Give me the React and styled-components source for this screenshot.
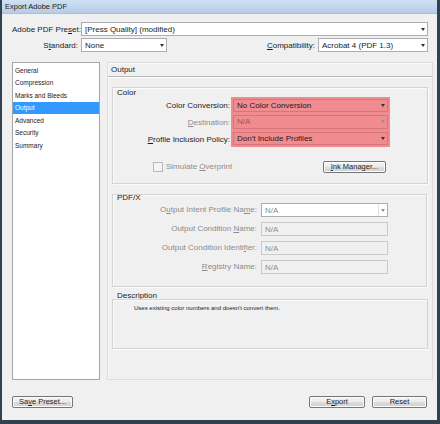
import React from 'react';
import styled, { createGlobalStyle } from 'styled-components';

const colors = {
    face: '#f0f0f0',
    frame: '#2e4250',
    text: '#1b1b1b',
    disabled: '#8c8c8c',
    groupLine: '#d3d3d3',
    field: '#abadb3',
    select: '#3399ff',
    mark: '#f08c90',
    markLine: '#d8747a',
}

const GlobalStyle = createGlobalStyle`
    html, body {
        margin: 0;
        padding: 0;
        background: ${colors.face};
    }
    * {
        box-sizing: border-box;
    }
`

const Window = styled.div`
    width: 440px;
    height: 424px;
    background: ${colors.face};
    border-left: 2px solid ${colors.frame};
    border-right: 3px solid ${colors.frame};
    border-bottom: 4px solid ${colors.frame};
    display: flex;
    flex-direction: column;
    font-family: "Liberation Sans", Arial, sans-serif;
    font-size: 8px;
    color: ${colors.text};
`

const TitleBar = styled.div`
    height: 14px;
    flex: none;
    display: flex;
    align-items: center;
    padding-left: 3px;
    font-size: 7.5px;
    background: linear-gradient(#cfe0f2, #b5cde8);
    border-bottom: 1px solid #a9c0da;
`

const Content = styled.div`
    flex: 1;
    display: flex;
    flex-direction: column;
    padding: 8px 9px 0 10px;
`

const TopRow = styled.div`
    display: flex;
    align-items: center;
    height: 14px;
    margin-bottom: ${props => props.gap || 0}px;
`

const Label = styled.span`
    width: ${props => props.width ? props.width + 'px' : 'auto'};
    flex: none;
    text-align: right;
    white-space: nowrap;
    padding-right: ${props => props.pad || 3}px;
    color: ${props => props.disabled ? colors.disabled : colors.text};
`

const Select = styled.div`
    height: 14px;
    width: ${props => props.width ? props.width + 'px' : 'auto'};
    flex: ${props => props.width ? 'none' : 1};
    display: flex;
    align-items: center;
    padding-left: 3px;
    background: ${props => props.marked ? colors.mark : props.disabled ? colors.face : '#fff'};
    border: 1px solid ${props => props.marked ? colors.markLine : props.disabled ? '#c9c9c9' : colors.field};
    color: ${props => props.dim ? (props.marked ? '#9a5458' : colors.disabled) : colors.text};
    white-space: nowrap;
    overflow: hidden;
    span:first-child {
        flex: 1;
    }
`

const Arrow = styled.span`
    flex: none;
    width: 9px;
    height: 100%;
    display: flex;
    align-items: center;
    justify-content: center;
    border-left: ${props => props.split ? '1px solid #e2e2e2' : 'none'};
    &::after {
        content: '';
        border-left: 2.5px solid transparent;
        border-right: 2.5px solid transparent;
        border-top: 3px solid ${props => props.light ? '#9c8a8c' : '#333'};
    }
`

const Spacer = styled.div`
    flex: 1;
`

const Body = styled.div`
    margin-top: 10px;
    height: 318px;
    flex: none;
    display: flex;
    gap: 7px;
`

const NavList = styled.div`
    width: 88px;
    flex: none;
    background: #fff;
    border: 1px solid #a5a5a5;
    padding-top: 1px;
    font-size: 6.5px;
`

const NavItem = styled.div`
    height: 12.5px;
    display: flex;
    align-items: center;
    padding-left: 2px;
    background: ${props => props.active ? colors.select : 'transparent'};
    color: ${props => props.active ? '#fff' : colors.text};
`

const Panel = styled.div`
    width: 326px;
    flex: none;
    border: 1px solid #dcdcdc;
    box-shadow: inset 1px 1px 0 #fafafa;
    display: flex;
    flex-direction: column;
    padding: 0 4px;
`

const PanelHeader = styled.div`
    height: 14px;
    display: flex;
    align-items: center;
    padding-left: 3px;
    margin: 0 -4px;
    border-bottom: 1px solid #b4b4b4;
    box-shadow: 0 1px 0 #fff;
`

const Group = styled.div`
    margin-top: ${props => props.top}px;
    border: 1px solid ${colors.groupLine};
    box-shadow: inset 1px 1px 0 #fbfbfb, 1px 1px 0 #fbfbfb;
    padding-bottom: ${props => props.bottom}px;
    width: ${props => props.width || 316}px;
`

const GroupTitle = styled.div`
    height: 9px;
    line-height: 9px;
    padding-left: 4px;
    margin-top: ${props => props.shift || 0}px;
`

const FieldBlock = styled.div`
    display: flex;
`

const LabelStack = styled.div`
    width: ${props => props.width}px;
    flex: none;
    display: flex;
    flex-direction: column;
    gap: ${props => props.gap}px;
    padding-top: ${props => props.top || 0}px;
`

const StackLabel = styled.div`
    height: 14px;
    line-height: 14px;
    text-align: right;
    white-space: nowrap;
    padding-right: ${props => props.pad || 1}px;
    color: ${props => props.disabled ? colors.disabled : colors.text};
`

const Highlight = styled.div`
    width: 159px;
    flex: none;
    background: ${colors.mark};
    padding: 2px;
    display: flex;
    flex-direction: column;
    gap: 3px;
`

const FieldStack = styled.div`
    width: 127px;
    flex: none;
    display: flex;
    flex-direction: column;
    gap: 5px;
    padding-top: 1px;
`

const OptionRow = styled.div`
    margin-top: 13px;
    height: 13px;
    display: flex;
    align-items: center;
    padding: 0 41px 0 40px;
`

const Check = styled.label`
    display: flex;
    align-items: center;
    gap: 3px;
    color: ${colors.disabled};
    &::before {
        content: '';
        width: 8px;
        height: 8px;
        border: 1px solid #b8b8b8;
        background: #f4f4f4;
    }
`

const Button = styled.button`
    height: 12px;
    width: ${props => props.width}px;
    padding: 0;
    font-family: inherit;
    font-size: 7.5px;
    color: ${colors.text};
    border: 1px solid #767676;
    border-radius: 2px;
    background: linear-gradient(#f3f3f3 0%, #ebebeb 50%, #dddddd 51%, #cfcfcf 100%);
    box-shadow: inset 0 0 0 1px #fcfcfc;
    line-height: 10px;
`

const DescTitle = styled.div`
    margin-top: 4px;
    height: 9px;
    line-height: 9px;
    padding-left: 5px;
`

const DescBox = styled.div`
    height: 50px;
    width: 316px;
    margin-top: -1px;
    border: 1px solid ${colors.groupLine};
    box-shadow: inset 1px 1px 0 #fbfbfb, 0 1px 0 #fff;
    padding: 5px 0 0 21px;
    font-size: 6px;
`

const Footer = styled.div`
    margin-top: 16px;
    display: flex;
    align-items: center;
    padding-right: 1px;
    gap: 7px;
`

const navItems = ['General', 'Compression', 'Marks and Bleeds', 'Output', 'Advanced', 'Security', 'Summary']

const pdfxRows = [
    { label: <>O<u>u</u>tput Intent Profile Na<u>m</u>e:</>, value: 'N/A', select: true },
    { label: <>Output Condition <u>N</u>ame:</>, value: 'N/A' },
    { label: <>Output Condition Identi<u>f</u>ier:</>, value: 'N/A' },
    { label: <><u>R</u>egistry Name:</>, value: 'N/A' },
]

export default function App() {
    return (
        <Window>
            <GlobalStyle />
            <TitleBar>Export Adobe PDF</TitleBar>
            <Content>
                <TopRow gap={2}>
                    <Label width={69}>Adobe PDF Pre<u>s</u>et:</Label>
                    <Select>
                        <span>[Press Quality] (modified)</span>
                        <Arrow />
                    </Select>
                </TopRow>
                <TopRow>
                    <Label width={69}>S<u>t</u>andard:</Label>
                    <Select width={86}>
                        <span>None</span>
                        <Arrow />
                    </Select>
                    <Spacer />
                    <Label><u>C</u>ompatibility:</Label>
                    <Select width={110}>
                        <span>Acrobat 4 (PDF 1.3)</span>
                        <Arrow />
                    </Select>
                </TopRow>

                <Body>
                    <NavList>
                        {navItems.map(item =>
                            <NavItem key={item} active={item === 'Output'}>{item}</NavItem>
                        )}
                    </NavList>

                    <Panel>
                        <PanelHeader>Output</PanelHeader>

                        <Group top={10} bottom={10}>
                            <GroupTitle>Color</GroupTitle>
                            <FieldBlock>
                                <LabelStack width={118} gap={3} top={2}>
                                    <StackLabel>Color Conversion:</StackLabel>
                                    <StackLabel disabled><u>D</u>estination:</StackLabel>
                                    <StackLabel><u>P</u>rofile Inclusion Policy:</StackLabel>
                                </LabelStack>
                                <Highlight>
                                    <Select marked>
                                        <span>No Color Conversion</span>
                                        <Arrow />
                                    </Select>
                                    <Select marked dim>
                                        <span>N/A</span>
                                        <Arrow light />
                                    </Select>
                                    <Select marked>
                                        <span>Don't Include Profiles</span>
                                        <Arrow />
                                    </Select>
                                </Highlight>
                            </FieldBlock>
                            <OptionRow>
                                <Check><span>Simulate <u>O</u>verprint</span></Check>
                                <Spacer />
                                <Button width={63}><u>I</u>nk Manager...</Button>
                            </OptionRow>
                        </Group>

                        <Group top={10} bottom={12} width={315}>
                            <GroupTitle shift={-2}>PDF/X</GroupTitle>
                            <FieldBlock>
                                <LabelStack width={148} gap={5} top={1}>
                                    {pdfxRows.map((row, i) =>
                                        <StackLabel key={i} disabled pad={4}>{row.label}</StackLabel>
                                    )}
                                </LabelStack>
                                <FieldStack>
                                    {pdfxRows.map((row, i) =>
                                        <Select key={i} disabled={!row.select} dim>
                                            <span>{row.value}</span>
                                            {row.select && <Arrow split light />}
                                        </Select>
                                    )}
                                </FieldStack>
                            </FieldBlock>
                        </Group>

                        <DescTitle>Description</DescTitle>
                        <DescBox>Uses existing color numbers and doesn't convert them.</DescBox>
                    </Panel>
                </Body>

                <Footer>
                    <Button width={61}>Sa<u>v</u>e Preset...</Button>
                    <Spacer />
                    <Button width={56}>E<u>x</u>port</Button>
                    <Button width={55}>Reset</Button>
                </Footer>
            </Content>
        </Window>
    )
}
